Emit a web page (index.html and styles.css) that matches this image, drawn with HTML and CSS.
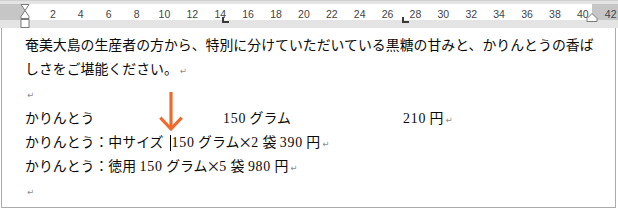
FILE: index.html
```html
<!DOCTYPE html>
<html lang="ja">
<head>
<meta charset="utf-8">
<link rel="stylesheet" href="styles.css">
</head>
<body>
<div class="ruler">
  <div class="band">
    <div class="nums"><span>2</span><span>4</span><span>6</span><span>8</span><span>10</span><span>12</span><span>14</span><span>16</span><span>18</span><span>20</span><span>22</span><span>24</span><span>26</span><span>28</span><span>30</span><span>32</span><span>34</span><span>36</span><span>38</span><span>40</span><span>42</span></div>
  </div>
  <svg class="indent-left" width="10" height="25" viewBox="0 0 10 25">
    <path d="M1 0.5 H9 L5 6.5 Z" fill="#fff" stroke="#7a7a7a"/>
    <path d="M5 6.5 L9 12.5 V14.5 H1 V12.5 Z" fill="#fff" stroke="#7a7a7a"/>
    <rect x="1" y="15.5" width="8" height="8" fill="#fff" stroke="#7a7a7a"/>
  </svg>
  <svg class="indent-right" width="12" height="10" viewBox="0 0 12 10">
    <path d="M6 0.5 L11 5.5 V8.5 H1 V5.5 Z" fill="#fff" stroke="#7a7a7a"/>
  </svg>
  <span class="tab tab-a"></span>
  <span class="tab tab-b"></span>
</div>
<div class="page">
  <p class="para wrap">奄美大島の生産者の方から、特別に分けていただいている黒糖の甘みと、かりんとうの香ばしさをご堪能ください。<span class="pm">↵</span></p>
  <p class="para"><span class="pm">↵</span></p>
  <p class="para tabs"><span class="col1">かりんとう</span><span class="col2"><span class="n">150</span> グラム</span><span class="col3"><span class="n">210</span> 円<span class="pm">↵</span></span></p>
  <p class="para">かりんとう：中サイズ<span class="caret"></span><span class="n">150</span> グラム<span class="x">×</span><span class="n">2</span> 袋 <span class="n">390</span> 円<span class="pm">↵</span></p>
  <p class="para">かりんとう：徳用 <span class="n">150</span> グラム<span class="x">×</span><span class="n">5</span> 袋 <span class="n">980</span> 円<span class="pm">↵</span></p>
  <p class="para"><span class="pm">↵</span></p>
  <svg class="arrow" width="28" height="44" viewBox="0 0 28 44">
    <path d="M14 3 V40" stroke="#ef6a2b" stroke-width="3.2" fill="none"/>
    <path d="M3.3 28.7 L14 40 L24.7 28.7" stroke="#ef6a2b" stroke-width="3.2" fill="none"/>
  </svg>
</div>
</body>
</html>
```

FILE: styles.css
```css
html, body {
  margin: 0;
  padding: 0;
  background: #fff;
}

body {
  width: 618px;
  height: 210px;
  overflow: hidden;
}

.ruler {
  position: relative;
  height: 28px;
  box-sizing: border-box;
  padding-top: 3px;
  background: #e4e4e4;
  border-top: 1px solid #d0d0d0;
}

.band {
  height: 16px;
  overflow: hidden;
  background: linear-gradient(to right, #c6c6c6 0, #c6c6c6 25px, #fff 25px, #fff 592px, #c6c6c6 592px);
}

.nums {
  display: flex;
  padding-left: 38.95px;
  font-family: "Liberation Sans", Arial, sans-serif;
  font-size: 10.5px;
  line-height: 20px;
  color: #444;
  white-space: nowrap;
}

.nums span {
  flex: 0 0 27.9px;
  text-align: center;
}

.indent-left {
  position: absolute;
  left: 20px;
  top: 3px;
}

.indent-right {
  position: absolute;
  left: 586px;
  top: 12px;
}

.tab {
  position: absolute;
  top: 16px;
  width: 5px;
  height: 4px;
  border-left: 2px solid #3a3a3a;
  border-bottom: 2px solid #3a3a3a;
}

.tab-a { left: 222px; }
.tab-b { left: 402px; }

.page {
  position: relative;
  margin-left: 1px;
  width: 615px;
  height: 180px;
  border: 1px solid #ababab;
  border-top: none;
  padding: 6px 0 0 23px;
  box-sizing: border-box;
  font-family: "Liberation Serif", "Noto Sans CJK JP", serif;
  font-size: 13.9px;
  line-height: 24.2px;
  color: #0a0a0a;
}

.para {
  margin: 0;
  height: 24.2px;
  white-space: nowrap;
}

.para.wrap {
  width: 572px;
  height: 48.4px;
  white-space: normal;
}

.tabs {
  display: flex;
}

.col1 { flex: 0 0 198px; }
.col2 { flex: 0 0 180px; }

.n {
  letter-spacing: 0.75px;
}

.x {
  font-family: "Noto Sans CJK JP", sans-serif;
  line-height: 0;
  margin: 0 -1px;
}

.pm {
  font-family: "DejaVu Sans", sans-serif;
  font-size: 8.5px;
  line-height: 0;
  color: #8c8c8c;
  margin-left: 2px;
}

.caret {
  display: inline-block;
  width: 1px;
  height: 16px;
  background: #000;
  margin: 0 1px 0 6px;
  vertical-align: -4px;
}

.arrow {
  position: absolute;
  left: 155px;
  top: 61px;
}
```
